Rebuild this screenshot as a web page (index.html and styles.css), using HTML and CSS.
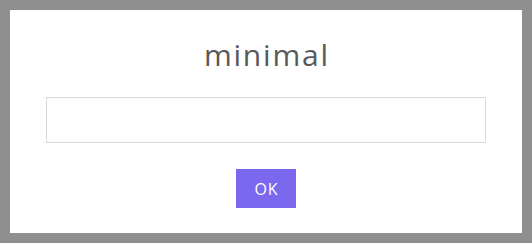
FILE: index.html
```html
<!DOCTYPE html>
<html>
<head>
<meta charset="utf-8">
<link rel="stylesheet" href="styles.css">
</head>
<body>
<div class="dialog">
  <h2 class="title">minimal</h2>
  <input class="field" type="text">
  <button class="ok">OK</button>
</div>
</body>
</html>
```
FILE: styles.css
```css
html, body {
  margin: 0;
  height: 100%;
}
body {
  background: #8f8f8f;
  padding: 10px;
  box-sizing: border-box;
  font-family: "Open Sans", "Liberation Sans", sans-serif;
}
.dialog {
  background: #ffffff;
  height: 223px;
  display: flex;
  flex-direction: column;
  align-items: center;
  box-sizing: border-box;
  padding-top: 27px;
}
.title {
  margin: 0;
  font-size: 30px;
  line-height: 36px;
  font-weight: 400;
  color: #595959;
  letter-spacing: 1.8px;
  text-indent: 1.8px;
}
.field {
  margin-top: 24px;
  width: 440px;
  height: 46px;
  box-sizing: border-box;
  border: 1px solid #d9d9d9;
  padding: 0 12px;
  outline: none;
  background: #fff;
}
.ok {
  margin-top: 26px;
  width: 60px;
  height: 39px;
  border: none;
  background: #7b68ee;
  color: #ffffff;
  font-family: "Open Sans", "Liberation Sans", sans-serif;
  font-size: 16px;
  letter-spacing: 1px;
  text-indent: 1px;
  padding: 0;
}
```
